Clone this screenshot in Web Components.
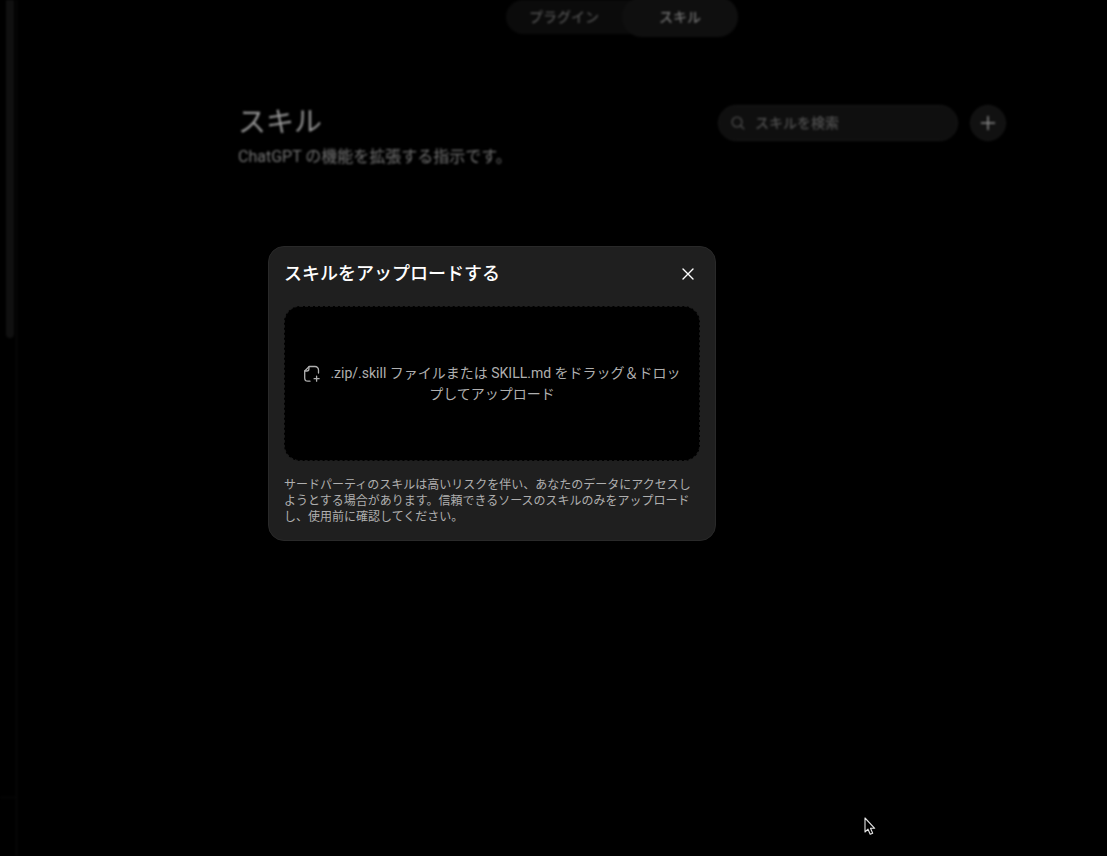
<!DOCTYPE html>
<html lang="ja">
<head>
<meta charset="utf-8">
<title>スキル</title>
<style>
html, body { margin: 0; background: #000; }
body { font-family: Roboto, "Noto Sans CJK JP", sans-serif; color: #fff; }
</style>
</head>
<body>
<skills-app></skills-app>
<script>
const define = (name, html) => {
  const template = document.createElement('template');
  template.innerHTML = html;
  customElements.define(name, class extends HTMLElement {
    constructor() {
      super();
      this.attachShadow({ mode: 'open' }).append(template.content.cloneNode(true));
    }
  });
};

define('side-rail', `
<style>
:host { display: flex; flex-direction: column; flex: none; width: 16px; border-right: 1px solid #0b0b0b; }
.scroll { flex: 1; padding-left: 6px; }
.thumb { width: 8px; height: 338px; border-radius: 0 0 4px 4px; background: #101010; }
.account { height: 58px; border-top: 1px solid #080808; }
</style>
<div class="scroll"><div class="thumb"></div></div>
<div class="account"></div>`);

define('view-tabs', `
<style>
:host { display: flex; justify-content: center; }
nav { display: flex; align-items: center; height: 34px; border-radius: 20px; background: #0b0b0b; }
button { width: 116px; height: 34px; padding: 0; border: 0; border-radius: 20px; background: none;
  font: 500 14px/20px Roboto, "Noto Sans CJK JP", sans-serif; color: #505050; }
button[aria-pressed="true"] { height: 40px; background: #0f0f0f; color: #707070; }
</style>
<nav>
<button aria-pressed="false">プラグイン</button>
<button aria-pressed="true">スキル</button>
</nav>`);

define('skill-search', `
<style>
:host { display: flex; gap: 12px; }
label { display: flex; align-items: center; gap: 10px; box-sizing: border-box; width: 240px; height: 36px;
  padding: 0 12px; border: 1px solid #171717; border-radius: 18px; background: #0f0f0f; color: #4c4c4c; }
svg { flex: none; }
input { flex: 1; min-width: 0; padding: 0; border: 0; outline: 0; background: none; color: #999;
  font: 500 14px/20px Roboto, "Noto Sans CJK JP", sans-serif; }
input::placeholder { color: #505050; opacity: 1; }
button { display: flex; align-items: center; justify-content: center; width: 36px; height: 36px; padding: 0;
  border: 1px solid #171717; border-radius: 18px; background: #111; color: #888; }
</style>
<label>
<svg width="14" height="14" viewBox="0 0 14 14" fill="none" stroke="currentColor" stroke-width="1.3" stroke-linecap="round" aria-hidden="true"><circle cx="6" cy="6" r="4.9"/><path d="M9.7 9.7 12.8 12.8"/></svg>
<input type="text" placeholder="スキルを検索" aria-label="スキルを検索">
</label>
<button aria-label="追加">
<svg width="16" height="16" viewBox="0 0 16 16" fill="none" stroke="currentColor" stroke-width="1.5" stroke-linecap="round"><path d="M8 1.5v13M1.5 8h13"/></svg>
</button>`);

define('skills-header', `
<style>
:host { display: flex; align-items: flex-start; justify-content: space-between; }
h1 { margin: 0 0 4px; font-size: 28px; line-height: 36px; font-weight: 400; color: #929292; }
p { margin: 0; font-size: 16px; line-height: 24px; color: #727272; }
</style>
<div><h1><slot name="title"></slot></h1><p><slot></slot></p></div>
<skill-search></skill-search>`);

define('upload-zone', `
<style>
:host { display: block; }
button { display: block; box-sizing: border-box; width: 100%; height: 155px; padding: 0 16px; border: 1px dashed #1a1a1a;
  border-radius: 16px; background: #000; color: #afafaf; text-align: center;
  font: 400 14px/21px Roboto, "Noto Sans CJK JP", sans-serif; }
svg { margin-right: 9px; vertical-align: -5px; }
</style>
<button><svg width="18" height="18" viewBox="0 0 18 18" fill="none" stroke="currentColor" stroke-width="1.3" stroke-linecap="round" stroke-linejoin="round" aria-hidden="true"><path d="M15.5 8V5a3.5 3.5 0 0 0-3.5-3.5H6.2L1.7 6v7a3.2 3.2 0 0 0 3.2 3.2H7"/><path d="M1.7 6h2.2a2 2 0 0 0 2-2V1.6M13.6 11.2v5M11.1 13.7h5"/></svg><slot></slot></button>`);

define('modal-card', `
<style>
:host { display: block; box-sizing: border-box; width: 100%; max-width: 448px; padding: 0 15px 15px;
  border: 1px solid #292929; border-radius: 16px; background: #1f1f1f; }
header { display: flex; align-items: center; justify-content: space-between; height: 53px; margin-bottom: 6px; }
h2 { margin: 0; font-size: 18px; line-height: 24px; font-weight: 500; color: #fff; }
button { display: flex; align-items: center; justify-content: center; width: 36px; height: 36px; margin-right: -6px;
  padding: 0; border: 0; background: none; color: #fff; }
p { margin: 16px 0 0; font-size: 12px; line-height: 16px; color: #afafaf; }
</style>
<header>
<h2><slot name="title"></slot></h2>
<button aria-label="閉じる"><svg width="12" height="12" viewBox="0 0 12 12" fill="none" stroke="currentColor" stroke-width="1.4" stroke-linecap="round"><path d="m1 1 10 10M11 1 1 11"/></svg></button>
</header>
<slot></slot>
<p><slot name="note"></slot></p>`);

define('mouse-pointer', `
<style>
:host { position: absolute; left: 864px; top: 817px; }
svg { display: block; }
</style>
<svg width="12" height="19" viewBox="0 0 12 19" aria-hidden="true"><path d="M1 1v14l3-2.8 2.2 5.1 2.5-1.1-2.2-4.9h4.2z" fill="#000" stroke="#e4e4e4" stroke-width="1.1" stroke-linejoin="round"/></svg>`);

define('skills-app', `
<style>
:host { display: block; position: relative; min-height: 100vh; overflow: hidden; }
.page { display: flex; min-height: 100vh; filter: blur(1px); }
main { flex: 1; padding: 0 101px 0 221px; }
skills-header { margin-top: 71px; }
.overlay { position: absolute; inset: 0; display: flex; align-items: center; justify-content: center;
  box-sizing: border-box; padding: 0 123px 69px 0; }
</style>
<div class="page">
<side-rail></side-rail>
<main>
<view-tabs></view-tabs>
<skills-header><span slot="title">スキル</span>ChatGPT の機能を拡張する指示です。</skills-header>
</main>
</div>
<div class="overlay">
<modal-card role="dialog" aria-label="スキルをアップロードする">
<span slot="title">スキルをアップロードする</span>
<upload-zone>.zip/.skill ファイルまたは SKILL.md をドラッグ＆ドロップしてアップロード</upload-zone>
<span slot="note">サードパーティのスキルは高いリスクを伴い、あなたのデータにアクセスしようとする場合があります。信頼できるソースのスキルのみをアップロードし、使用前に確認してください。</span>
</modal-card>
</div>
<mouse-pointer></mouse-pointer>`);
</script>
</body>
</html>
